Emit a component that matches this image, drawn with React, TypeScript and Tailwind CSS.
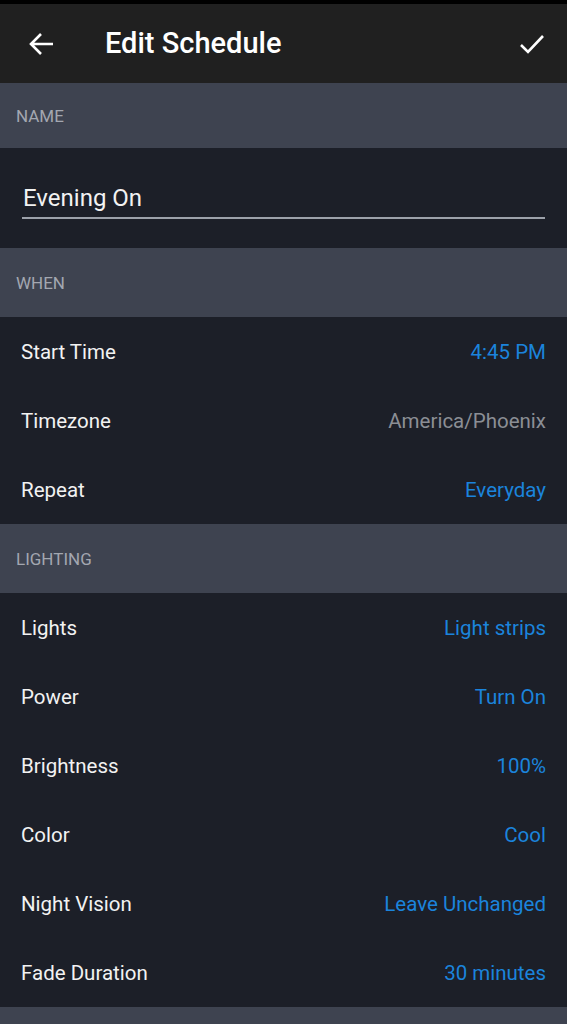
const font = { fontFamily: "Roboto, 'Noto Sans', sans-serif" };

type Row = { label: string; value: string; muted?: boolean };

const when: Row[] = [
  { label: "Start Time", value: "4:45 PM" },
  { label: "Timezone", value: "America/Phoenix", muted: true },
  { label: "Repeat", value: "Everyday" },
];

const lighting: Row[] = [
  { label: "Lights", value: "Light strips" },
  { label: "Power", value: "Turn On" },
  { label: "Brightness", value: "100%" },
  { label: "Color", value: "Cool" },
  { label: "Night Vision", value: "Leave Unchanged" },
  { label: "Fade Duration", value: "30 minutes" },
];

function SectionHeader({ title, className = "h-[69px]" }: { title: string; className?: string }) {
  return (
    <div className={`flex items-center bg-[#3e4350] pl-[16px] pt-[2px] text-[17px] text-[#a3a7b0] ${className}`}>
      {title}
    </div>
  );
}

function SettingRow({ label, value, muted }: Row) {
  return (
    <div className="flex h-[69px] items-center justify-between px-[21px] pt-[2px] text-[20.5px]">
      <span className="text-[#f2f2f2]">{label}</span>
      <span className={muted ? "text-[#8b8e95]" : "text-[#1b84dc]"}>{value}</span>
    </div>
  );
}

export default function App() {
  return (
    <div className="h-[1024px] w-[567px] overflow-hidden bg-[#1c1f28]" style={font}>
      <div className="h-[4px] bg-black" />
      <header className="flex h-[79px] items-center bg-[#202020] pl-[28px] pr-[22px] text-white">
        <svg width="26" height="24" viewBox="0 0 26 24" fill="none" stroke="currentColor" strokeWidth="2.6">
          <path d="M25 12H3M13 2L3 12l10 10" />
        </svg>
        <h1 className="ml-[51px] flex-1 text-[29px] font-medium">Edit Schedule</h1>
        <svg width="26" height="22" viewBox="0 0 26 22" fill="none" stroke="currentColor" strokeWidth="2.6">
          <path d="M2 12l7 7L24 3" />
        </svg>
      </header>
      <SectionHeader title="NAME" className="h-[65px]" />
      <div className="h-[100px] px-[22px] pt-[35px]">
        <div className="border-b-2 border-[#9ca1aa] pb-[4px] pl-[1px] text-[24px] leading-[30px] text-[#f2f2f2]">
          Evening On
        </div>
      </div>
      <SectionHeader title="WHEN" />
      {when.map((r) => (
        <SettingRow key={r.label} {...r} />
      ))}
      <SectionHeader title="LIGHTING" />
      {lighting.map((r) => (
        <SettingRow key={r.label} {...r} />
      ))}
      <SectionHeader title="" />
    </div>
  );
}
